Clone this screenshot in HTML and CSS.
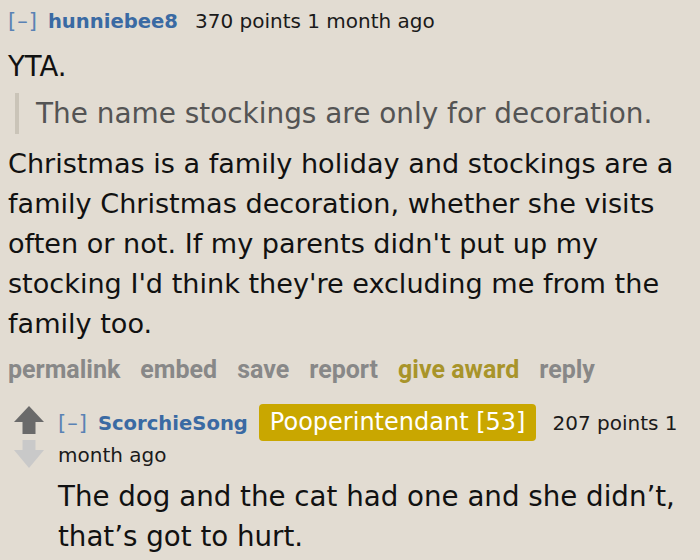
FILE: index.html
```html
<!DOCTYPE html>
<html>
<head>
<meta charset="utf-8">
<link rel="stylesheet" href="styles.css">
</head>
<body>
<div class="comment">
  <div class="tagline"><span class="expand">[–]</span><span class="author author1">hunniebee8</span><span class="score">370 points 1 month ago</span></div>
  <div class="md">
    <p class="first">YTA.</p>
    <blockquote><p>The name stockings are only for decoration.</p></blockquote>
    <p class="body">Christmas is a family holiday and stockings are a family Christmas decoration, whether she visits often or not. If my parents didn't put up my stocking I'd think they're excluding me from the family too.</p>
  </div>
  <ul class="buttons">
    <li>permalink</li>
    <li>embed</li>
    <li>save</li>
    <li>report</li>
    <li class="award">give award</li>
    <li>reply</li>
  </ul>
  <div class="child">
    <div class="votes">
      <svg class="arrow" width="30" height="28" viewBox="0 0 30 28"><path d="M15 0 L30 16 L21.5 16 L21.5 28 L8.5 28 L8.5 16 L0 16 Z" fill="#6a6a6a"/></svg>
      <svg class="arrow" width="30" height="28" viewBox="0 0 30 28"><path d="M15 28 L30 10 L21.5 10 L21.5 0 L8.5 0 L8.5 10 L0 10 Z" fill="#c9c9c9"/></svg>
    </div>
    <div class="entry">
      <div class="tagline tagline2"><span class="expand">[–]</span><span class="author author2">ScorchieSong</span><span class="flair">Pooperintendant [53]</span><span class="score">207 points 1 </span><span class="score">month ago</span></div>
      <div class="md">
        <p class="reply-text">The dog and the cat had one and she didn’t, that’s got to hurt.</p>
      </div>
    </div>
  </div>
</div>
</body>
</html>
```

FILE: styles.css
```css
html, body {
  margin: 0;
  padding: 0;
  background: #e2dcd2;
}
body {
  font-family: "DejaVu Sans", Verdana, sans-serif;
  color: #111;
}
.comment {
  padding: 6px 0 0 8px;
}
.tagline {
  font-size: 20px;
  line-height: 30px;
}
.expand {
  color: #5a82b4;
  font-size: 21px;
  letter-spacing: 1px;
  margin-right: 10px;
}
.author {
  color: #3a6aa3;
  font-weight: bold;
  font-size: 19.6px;
}
.author1 {
  margin-right: 17px;
}
.author2 {
  margin-right: 11px;
}
.score {
  color: #1a1a1a;
}
.md p {
  margin: 0;
  font-size: 27.5px;
  line-height: 40px;
}
.md p.first {
  margin-top: 9px;
}
.md p.body {
  font-size: 27.1px;
}
blockquote {
  margin: 7px 0 10px 7px;
  padding: 1px 0 0 17px;
  border-left: 4px solid #cac4b8;
}
blockquote p {
  color: #545454;
}
.md blockquote p {
  font-size: 27.9px;
}
.buttons {
  list-style: none;
  margin: 11px 0 0;
  padding: 0;
  display: flex;
  gap: 20px;
  font-family: Roboto, "Liberation Sans", sans-serif;
  font-weight: bold;
  font-size: 25px;
  line-height: 30px;
  color: #888;
}
.buttons .award {
  color: #a8942a;
}
.child {
  display: flex;
  margin-top: 19px;
}
.votes {
  width: 50px;
  display: flex;
  flex-direction: column;
  align-items: flex-start;
  padding: 2px 0 0 5px;
  gap: 6px;
  flex: none;
  box-sizing: border-box;
}
.votes .arrow {
  width: 32px;
}
.entry {
  flex: 1;
}
.tagline2 {
  line-height: 28px;
}
.flair {
  display: inline-block;
  background: #c9a700;
  color: #fff;
  font-size: 24px;
  line-height: 37px;
  padding: 0 11px;
  border-radius: 4px;
  margin-right: 16px;
}
.entry .md {
  margin-top: 8px;
}
.md p.reply-text {
  font-size: 27.7px;
}
```
